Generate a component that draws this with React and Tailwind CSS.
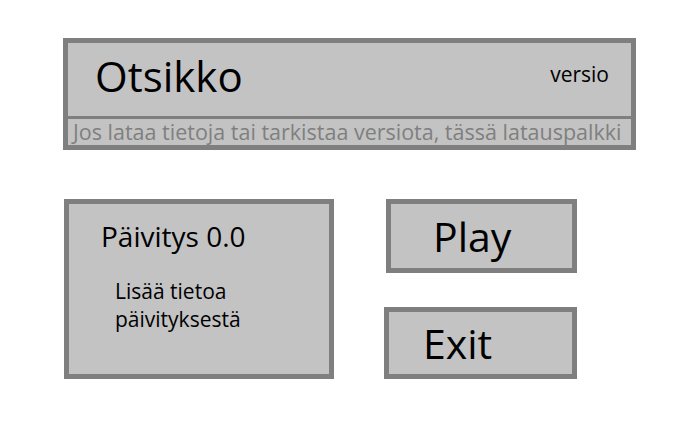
import React from 'react';

const font = { fontFamily: '"Open Sans", Lato, sans-serif' };

const App = () => {
  return (
    <div className="w-[693px] h-[433px] bg-white pt-[38px] pl-[63px]" style={font}>
      <div className="w-[573px] border-[5px] border-[#7f7f7f] bg-[#c3c3c3]">
        <div className="h-[73px] flex justify-between">
          <h1 className="pl-[27px] pt-[9px] text-[42px] leading-[48px] text-black">Otsikko</h1>
          <span className="pr-[22px] pt-[19px] text-[21px] leading-[24px] text-black">versio</span>
        </div>
        <div className="border-t-[3px] border-[#7f7f7f] h-[29px] pl-[5px] text-[21.5px] leading-[26px] text-[#7f7f7f] whitespace-nowrap">
          Jos lataa tietoja tai tarkistaa versiota, tässä latauspalkki
        </div>
      </div>

      <div className="flex mt-[49px] ml-px">
        <div className="w-[270px] h-[180px] border-[5px] border-[#7f7f7f] bg-[#c3c3c3] pl-[32px] pt-[15px]">
          <h2 className="text-[28px] leading-[35px] text-black">Päivitys 0.0</h2>
          <p className="mt-[23px] pl-[14px] text-[21px] leading-[28px] text-black">
            Lisää tietoa
            <br />
            päivityksestä
          </p>
        </div>

        <div className="ml-[50px] w-[193px] flex flex-col items-end gap-[34px]">
          <button className="w-[191px] h-[74px] border-[5px] border-[#7f7f7f] bg-[#c3c3c3] text-left pl-[42px] text-[41px] leading-[64px] text-black">
            Play
          </button>
          <button className="w-[193px] h-[72px] border-[5px] border-[#7f7f7f] bg-[#c3c3c3] text-left pl-[34px] text-[41px] leading-[62px] text-black">
            Exit
          </button>
        </div>
      </div>
    </div>
  );
};

export default App;
